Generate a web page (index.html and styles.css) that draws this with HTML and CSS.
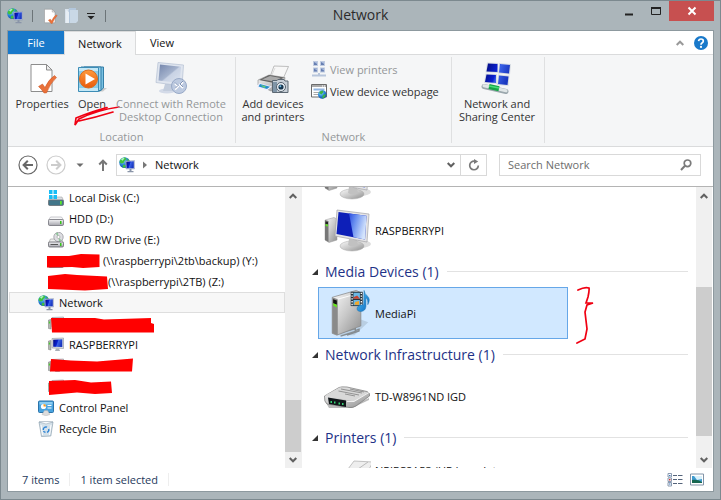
FILE: index.html
```html
<!DOCTYPE html>
<html lang="en">
<head>
<meta charset="utf-8">
<title>Network</title>
<link rel="stylesheet" href="styles.css">
</head>
<body>
<svg class="defs" aria-hidden="true">
  <defs>
    <radialGradient id="globe" cx=".35" cy=".3" r=".8"><stop offset="0" stop-color="#8fe0ff"/><stop offset=".5" stop-color="#2a86d8"/><stop offset="1" stop-color="#0a3f9c"/></radialGradient>
    <linearGradient id="screen" x2="1" y2=".4"><stop offset="0" stop-color="#2a4ce0"/><stop offset=".4" stop-color="#6a90f0"/><stop offset="1" stop-color="#d4e4fc"/></linearGradient>
    <linearGradient id="screen-dark" x2="1" y2=".3"><stop offset="0" stop-color="#030a78"/><stop offset=".5" stop-color="#0a20d0"/><stop offset=".6" stop-color="#3a62e8"/><stop offset="1" stop-color="#1a38c0"/></linearGradient>
    <linearGradient id="metal" x2="1" y2="1"><stop offset="0" stop-color="#fafafa"/><stop offset=".5" stop-color="#c9c9c9"/><stop offset="1" stop-color="#8e8e8e"/></linearGradient>
    <linearGradient id="drive" x2="0" y2="1"><stop offset="0" stop-color="#f4f4f6"/><stop offset="1" stop-color="#a4a4ac"/></linearGradient>
    <linearGradient id="orange" x2="0" y2="1"><stop offset="0" stop-color="#ff9a3c"/><stop offset="1" stop-color="#e85a0c"/></linearGradient>
    <linearGradient id="faded" x2="1" y2="1"><stop offset="0" stop-color="#7486ac"/><stop offset=".5" stop-color="#a5b3cd"/><stop offset=".55" stop-color="#c8d2e4"/><stop offset="1" stop-color="#dde4f0"/></linearGradient>
    <linearGradient id="note" x2="1" y2="1"><stop offset="0" stop-color="#58c4f6"/><stop offset="1" stop-color="#0869c0"/></linearGradient>
    <symbol id="i-network" viewBox="0 0 16 16">
      <circle cx="5.6" cy="5.6" r="5.4" fill="url(#globe)"/>
      <path d="M1 3.2Q3 0 6.400.600L7.500 2 5.500 4 4.500 6 2 6.500.500 5zM4.500 7.500L7 8.500 5.600 11 3.500 10zM8.500 1.200L10.600 4 8.500 4z" fill="#3fc43c"/>
      <path d="M2 2.500Q3.600.800 5.600 1.200L3.500 3.800z" fill="#b4f0c8"/>
      <path d="M6.500 4L15.500 3.500 15.500 12 7 12z" fill="#cfd6e6" stroke="#7b86a8" stroke-width=".4"/>
      <path d="M7.300 4.800L14.800 4.300 14.800 11.200 7.600 11.200z" fill="url(#screen-dark)"/>
      <path d="M10.500 12h2v2h2v1.200h-6v-1.200h2z" fill="#8a95a8"/>
    </symbol>
    <symbol id="i-props" viewBox="0 0 32 32">
      <path d="M5 2.500H20.500L26 8V29.500H5z" fill="#fff" stroke="#8d8d8d"/>
      <path d="M20.500 2.500V8H26z" fill="#eee" stroke="#8d8d8d"/>
      <path d="M12.500 24.500L16.500 22 19 25.500Q22.500 17.500 28.500 13.500L30.500 15.500Q24 21.500 20.500 31L18 31Q15.500 27 12.500 24.500z" fill="#e9713a" stroke="#c9501c" stroke-width=".5"/>
    </symbol>
    <symbol id="i-open" viewBox="0 0 32 32">
      <path d="M26 26L31 26 27 29.500 22 29.500z" fill="#ccc"/>
      <path d="M8 5L27.500 5V26L24 29H8z" fill="#79c1e2" stroke="#347fa8"/>
      <path d="M5 5H25V28.500H5z" fill="#9ad4ee" stroke="#347fa8"/>
      <path d="M2.500 5.500H22.500V29.500H2.500z" fill="#8acbe8" stroke="#3d8db6"/>
      <path d="M3 6H22V9H3zM3 26H22V29H3z" fill="#c3e8f7"/>
      <circle cx="12.500" cy="17" r="9" fill="url(#orange)" stroke="#dd6b1c"/>
      <path d="M9.500 11.500L19 17 9.500 22.500z" fill="#fff"/>
    </symbol>
    <symbol id="i-remote" viewBox="0 0 32 32">
      <ellipse cx="12" cy="29" rx="8" ry="2.500" fill="#d3dae8"/>
      <path d="M10 22H17L18 29H8z" fill="#c3cddd"/>
      <path d="M3 .5L28.500 3 27 24 1 20.500z" fill="#dfe5ef" stroke="#b5c0d2" stroke-width=".7"/>
      <path d="M5 2.500L26 4.800 24.800 21 3.500 18.500z" fill="url(#faded)"/>
      <circle cx="24" cy="24" r="7.500" fill="#bdcae0" stroke="#98a9c7"/>
      <path d="M20 21.500L23 24.500 20 27.500M28 20L25 23 28 26" fill="none" stroke="#fff" stroke-width="1.800"/>
      <path d="M20 20.500L23 23.500 20 26.500M28 19L25 22 28 25" fill="none" stroke="#667ba5" stroke-width=".8"/>
    </symbol>
    <symbol id="i-adddev" viewBox="0 0 32 32">
      <path d="M17 4L31.500 4.500 26 17 13 15z" fill="#f7f7f7" stroke="#a5a5a5" stroke-width=".7"/>
      <path d="M18 6L14.500 14" stroke="#ddd"/>
      <path d="M1 18L12 13 28 15.500 27 24 14 29 1 23z" fill="url(#metal)" stroke="#777" stroke-width=".5"/>
      <path d="M2 18L12 13 27 15.500 17 21z" fill="#626262"/>
      <path d="M5 17.500L13 14 24 16 17 19.500z" fill="#aaa"/>
      <path d="M2 21L15 24.500 10 28.500 0 25z" fill="#eef"/>
      <path d="M3 22L13 24.700 10 27 1.500 24.500z" fill="#268dca"/><path d="M4 23L9 24.500 7 26z" fill="#6ad36b"/>
      <path d="M15.500 20V18.500H20L21 17.500H27L28 19H31V30.500H15.500z" fill="#c6ced6" stroke="#5c6873"/>
      <path d="M16 20H20V30H16z" fill="#8095a7"/>
      <circle cx="24" cy="25" r="4.500" fill="#eaf0f5" stroke="#55616d"/><circle cx="24" cy="25" r="2.600" fill="#16364f"/><circle cx="23.300" cy="24.300" r="1" fill="#71bbe2"/>
    </symbol>
    <symbol id="i-share" viewBox="0 0 32 32">
      <path d="M6 .5L17 1V11L4.500 10.500zM18 1L30 2 29 12.500 17 11.500zM4.500 11.500L16 12V22L3 21zM17 12.500L28.500 13.500 27.500 24 16 23z" fill="#d7dce2"/>
      <path d="M7 1.500L16.500 2V10L5.500 9.500zM19 2L29 3 28 11.500 18 10.500zM5.500 12.500L15 13V21L4 20zM18 13.500L27.500 14.500 26.500 23 17 22z" fill="url(#screen-dark)"/>
      <path d="M3 24.500L25 29.500" stroke="#9ba7ad" stroke-width="5" stroke-linecap="round"/>
      <path d="M3 23.800L25 28.800" stroke="#e0e6e7" stroke-width="3" stroke-linecap="round"/>
      <path d="M8 24.500L18 26.800" stroke="#16a448" stroke-width="5"/><path d="M8 24L18 26" stroke="#46dd77" stroke-width="1.500"/>
    </symbol>
    <symbol id="i-viewprinters" viewBox="0 0 16 16">
      <path d="M2 0H7V5H2zM9 0H14V5H9zM2 6.500H7V11.500H2zM9 6.500H14V11.500H9z" fill="#bfcbe0"/>
      <path d="M3 1H6V4H3zM10 1H13V4H10zM3 7.500H6V10.500H3zM10 7.500H13V10.500H10z" fill="#667eb1"/>
      <path d="M3 1L6 1 6 3zM10 1L13 1 13 3zM3 7.500L6 7.500 6 9.500zM10 7.500L13 7.500 13 9.500z" fill="#a9bbdd"/>
      <path d="M7 12H9V14H7zM1 13.500H15V15.500H1z" fill="#b8c6dc"/>
    </symbol>
    <symbol id="i-webpage" viewBox="0 0 16 16">
      <path d="M.5 1.500H15.500V14H.5z" fill="#fff" stroke="#6b6b6b"/>
      <path d="M1 2H15V4H1z" fill="#aaa"/><path d="M11 2.500h1v1h-1zM13 2.500h1v1h-1z" fill="#fff"/>
      <path d="M2.500 5.500H13.500V7.500H2.500z" fill="#91b5e1"/><path d="M2.500 9.500H8M2.500 11.500H8" stroke="#a9a9a9"/>
      <circle cx="11.300" cy="11.500" r="4.300" fill="url(#globe)"/><path d="M8 10Q9 7.500 11.500 7.500L12.500 9 10.500 11.500zM12 12L15 11 13.500 14.500 11 15.500z" fill="#3db544"/>
    </symbol>
    <symbol id="i-drive" viewBox="0 0 16 16">
      <path d="M2.500 6H13.500L15.500 9H.5z" fill="#f7f7f8" stroke="#a9a9b0" stroke-width=".6"/>
      <rect x=".5" y="8.500" width="15" height="6" rx="1.200" fill="url(#drive)" stroke="#71717a" stroke-width=".8"/>
      <path d="M12 10h1.500v3H12z" fill="#38c31b"/>
    </symbol>
    <symbol id="i-windrive" viewBox="0 0 16 16">
      <path d="M2 7H14L15.500 10.500H.5z" fill="#dcdee2" stroke="#999" stroke-width=".5"/>
      <path d="M1 0H4.500V4H1zM5.500 0H9V4H5.500zM1 5H4.500V9H1zM5.500 5H9V9H5.500z" fill="#18bdf5"/>
      <rect x=".5" y="10" width="15" height="5.500" rx="1.200" fill="#42768a" stroke="#676d74" stroke-width=".8"/>
      <path d="M12 11h1.800v3.500H12z" fill="#5be52a"/>
    </symbol>
    <symbol id="i-dvd" viewBox="0 0 16 16">
      <path d="M2.500 7H13.500L15.500 11H.5z" fill="#eee" stroke="#999" stroke-width=".6"/>
      <circle cx="10.500" cy="5" r="4.700" fill="#dedee2" stroke="#8d8d94" stroke-width=".7"/><path d="M10.500 5L7.500 1.500 10 .600zM10.500 5L13.500 8.500 11 9.500z" fill="#90c59b"/><circle cx="10.500" cy="5" r="1.500" fill="#fff" stroke="#888" stroke-width=".5"/>
      <rect x=".5" y="10" width="15" height="5" rx="1.200" fill="url(#drive)" stroke="#64646c" stroke-width=".8"/><path d="M2.500 12.500H10" stroke="#555"/><path d="M12 11h1.500v3H12z" fill="#38c31b"/>
    </symbol>
    <symbol id="i-pc" viewBox="0 0 16 16">
      <path d="M.5 4L3 3.500V13L.5 12.500z" fill="#b3b8b3" stroke="#777" stroke-width=".5"/><path d="M.8 5.500h1.300v2H.8z" fill="#4aca31"/>
      <path d="M4 1.500L15.500 1V11.500L4 11z" fill="#d9dce2" stroke="#8f95a0" stroke-width=".6"/><path d="M5.200 2.700L14.300 2.200V10.100L5.200 9.800z" fill="url(#screen-dark)"/>
      <path d="M8 11.500h3l1 2.500h-5z" fill="#a9afb8"/>
    </symbol>
    <symbol id="i-cpl" viewBox="0 0 16 16">
      <rect x=".5" y="1" width="15" height="11.500" rx="1" fill="#48a3df" stroke="#2b73a9"/><path d="M1.500 2H14.500V4.500H1.500z" fill="#8bcdf2"/>
      <circle cx="5.500" cy="6.500" r="2.600" fill="#fff"/><path d="M5.500 6.500V4A2.500 2.500 0 0 1 8 6.500z" fill="#f29b22"/><path d="M9.500 5.500H13.500M9.500 8H13.500" stroke="#fff" stroke-width="1.200"/>
      <path d="M6.500 10.500H9.500L12 14.500 8 15.800 4 14.500z" fill="#dcdcdc" stroke="#aaa" stroke-width=".4"/>
    </symbol>
    <symbol id="i-bin" viewBox="0 0 16 16">
      <path d="M1 1L15 1 12.800 15 3.500 15.500z" fill="#d4e1ea" stroke="#8ca0af" stroke-width=".7"/><path d="M1 1L8 3 15 1 8 .400z" fill="#f7fafc" stroke="#93a5b2" stroke-width=".5"/>
      <path d="M3 4L4.500 14M13 4L11.500 14" stroke="#fff"/><path d="M5.300 9A2.700 2.700 0 0 1 9 6.200M10.700 8A2.700 2.700 0 0 1 9 11.300M7.500 11.300A2.700 2.700 0 0 1 5.500 10" fill="none" stroke="#2e84d5" stroke-width="1.400"/>
    </symbol>
    <symbol id="i-bigpc" viewBox="0 0 48 48">
      <ellipse cx="37" cy="38" rx="11" ry="4" fill="#ddd"/>
      <path d="M2 14L11 11.500 14 13V34L6 36.500 2 34z" fill="url(#metal)" stroke="#999" stroke-width=".5"/>
      <path d="M2 14L5.500 15V36L2 34z" fill="#777"/><path d="M2.500 15.500L5 16V18.500L2.500 18z" fill="#222"/><path d="M2.500 18L5 18.500V20.500L2.500 20z" fill="#62df28"/>
      <ellipse cx="29" cy="40" rx="12" ry="5" fill="url(#metal)" stroke="#aaa" stroke-width=".5"/>
      <path d="M26 33L34 34 35 39Q30 42 25 39z" fill="#c1c1c1"/>
      <path d="M14 4L46 8 44 36 12 30z" fill="#e5e5e6" stroke="#a4a4a8" stroke-width=".7"/>
      <path d="M15.500 6L43.500 9.800 42 33.500 13.500 28z" fill="#0d1fb8"/><path d="M26 7.500L43.500 9.800 42 33.500 30.500 31.300z" fill="url(#screen)"/>
    </symbol>
    <symbol id="i-media" viewBox="0 0 48 52">
      <path d="M22 46L36 42 39 33 47 36 32 50 14 50z" fill="#a8bdcf" opacity=".6"/>
      <path d="M15 48L33 43V46L17 51M33 45L37 43.500 37 45.500 24 50" fill="none" stroke="#858c91" stroke-width="1.500"/>
      <path d="M8 9L34 1.500 39 4V40L13 50 8 48z" fill="url(#metal)" stroke="#888" stroke-width=".8"/>
      <path d="M8 9L14 11V50L8 48z" fill="#8a8a8a"/><path d="M14 11L39 4" stroke="#fff"/>
      <path d="M9 11L13 12.500V17L9 15.500z" fill="#111"/><path d="M9 15.500L13 17V20L9 18z" fill="#65e51c"/>
      <path d="M28 3H41V18.500H28z" fill="#26333b"/><path d="M31 4H38V10.500H31zM31 12H38V17.500H31z" fill="#6bb8e4"/><path d="M31 9L35 7 38 10.500H31z" fill="#c8402c"/><path d="M33 14L37 13V17H32z" fill="#f3a728"/>
      <path d="M29.500 4V18M39.500 4V18" stroke="#fff" stroke-width="1.500" stroke-dasharray="1.500 1.500"/>
      <path d="M42.500 1.500Q43 5 46 7.500 50 11 46.500 17 47 11 44.500 9.500V19Q44 24 39 24.500 34 24 35 20 37 16.500 42 17z" fill="url(#note)" stroke="#176cab" stroke-width=".5"/>
    </symbol>
    <symbol id="i-router" viewBox="0 0 48 24">
      <path d="M2 15L25 22 46 12V14L29 22 6 22z" fill="#bbb"/>
      <path d="M1.500 10L16 1.500Q18 .500 24 1L44 5.500Q47.500 7 46.500 10L33 20Q30 22 26 21.500L4 18Q1 16 1.500 10z" fill="url(#metal)" stroke="#777" stroke-width=".7"/>
      <path d="M2 9.500L17 1.500 45 6.500 31 15.500z" fill="#d8d8d8"/>
      <path d="M18 3L39 7M15.500 5L36 9M27 3L41 6M22 8L32 10" stroke="#8b8b8b" stroke-width=".9"/>
      <path d="M5 11.500L23 14.500V21L6 18z" fill="#101619"/><path d="M7.500 15h1.500v2H7.500zM11 15.500h1.500v2H11zM15.500 16.500H17v2h-1.500zM19 17h1.500v2H19z" fill="#37d275"/>
      <path d="M24 15.500L31 15.500 46 6.500" fill="none" stroke="#fff" stroke-width=".8"/>
    </symbol>
    <symbol id="i-up" viewBox="0 0 8 6"><path d="M.7 5L4 1.700 7.300 5" fill="none" stroke="currentColor" stroke-width="2"/></symbol>
    <symbol id="i-down" viewBox="0 0 8 6"><path d="M.7 1L4 4.300 7.300 1" fill="none" stroke="currentColor" stroke-width="2"/></symbol>
  </defs>
</svg>

<div class="window">
  <header class="titlebar">
    <div class="quick">
      <svg class="i16"><use href="#i-network"/></svg>
      <span class="bar"></span>
      <button aria-label="Properties"><svg class="i16"><use href="#i-props"/></svg></button>
      <button aria-label="Open folder"><svg class="i16" viewBox="0 0 16 16"><path d="M1 1H5V15H1z" fill="#d9e3ed"/><path d="M5 0H12V15H2z" fill="#b3c7dc"/><path d="M6 2H14V13L12 15H6z" fill="#c9d8e6"/><path d="M2 2L5 4V15H2z" fill="#e7eef4"/></svg></button>
      <button aria-label="Customize"><svg class="i8" viewBox="0 0 8 8"><path d="M0 1.500H8" stroke="#222"/><path d="M.5 4H7.500L4 7.500z" fill="#222"/></svg></button>
      <span class="bar"></span>
    </div>
    <h1>Network</h1>
    <div class="caption">
      <button class="cap" aria-label="Minimize"><svg viewBox="0 0 10 10"><path d="M1 8.500H9" stroke="#222" stroke-width="2"/></svg></button>
      <button class="cap" aria-label="Maximize"><svg viewBox="0 0 10 10"><path d="M.5 1.500H9.500V8.500H.5z" fill="none" stroke="#222"/><path d="M0 2H10" stroke="#222" stroke-width="2"/></svg></button>
      <button class="cap close" aria-label="Close"><svg viewBox="0 0 10 10"><path d="M1.500 1.500L8.500 8.500M8.500 1.500L1.500 8.500" stroke="#fff" stroke-width="2"/></svg></button>
    </div>
  </header>

  <div class="client">
    <nav class="tabs">
      <button class="tab file">File</button>
      <button class="tab active">Network</button>
      <button class="tab">View</button>
      <span class="grow"></span>
      <button class="mini" aria-label="Minimize the Ribbon"><svg class="chev"><use href="#i-up"/></svg></button>
      <button class="mini" aria-label="Help"><svg class="help" viewBox="0 0 14 14"><circle cx="7" cy="7" r="7" fill="#1979ca"/><path d="M4.600 5.200Q4.800 3 7 3 9.300 3 9.300 5 9.300 6.200 8 6.900 7 7.500 7 8.700" fill="none" stroke="#fff" stroke-width="1.700"/><circle cx="7" cy="10.900" r="1.100" fill="#fff"/></svg></button>
    </nav>

    <section class="ribbon">
      <div class="group location">
        <div class="tools">
          <button class="big props"><svg class="i32"><use href="#i-props"/></svg><span>Properties</span></button>
          <button class="big open"><svg class="i32"><use href="#i-open"/></svg><span>Open</span>
            <svg class="underline" viewBox="0 0 48 24"><path d="M46 2Q24 5 6 14L2 20 3 13Q20 6 34 2.500M6 16Q24 12 40 7" fill="none" stroke="#f00012" stroke-width="1.700" stroke-linecap="round"/></svg></button>
          <button class="big remote" disabled><svg class="i32"><use href="#i-remote"/></svg><span>Connect with Remote<br>Desktop Connection</span></button>
        </div>
        <div class="caption-label">Location</div>
      </div>
      <div class="group net">
        <div class="tools">
          <button class="big add"><svg class="i32"><use href="#i-adddev"/></svg><span>Add devices<br>and printers</span></button>
          <div class="stack">
            <button class="small" disabled><svg class="i16"><use href="#i-viewprinters"/></svg>View printers</button>
            <button class="small"><svg class="i16"><use href="#i-webpage"/></svg>View device webpage</button>
          </div>
        </div>
        <div class="caption-label">Network</div>
      </div>
      <div class="group share">
        <div class="tools">
          <button class="big"><svg class="i32"><use href="#i-share"/></svg><span>Network and<br>Sharing Center</span></button>
        </div>
      </div>
    </section>

    <div class="address">
      <button class="round" aria-label="Back"><svg class="i20" viewBox="0 0 20 20"><circle cx="10" cy="10" r="9" fill="none" stroke="#686868" stroke-width="1.200"/><path d="M15 10H6M9.800 5.800L5.600 10 9.800 14.200" fill="none" stroke="#686868" stroke-width="2"/></svg></button>
      <button class="round" aria-label="Forward"><svg class="i20" viewBox="0 0 20 20"><circle cx="10" cy="10" r="9" fill="none" stroke="#ccc" stroke-width="1.200"/><path d="M5 10H14M10.200 5.800L14.400 10 10.200 14.200" fill="none" stroke="#ccc" stroke-width="2"/></svg></button>
      <button class="hist" aria-label="Recent locations"><svg class="i8" viewBox="0 0 8 8"><path d="M.5 2.500H7.500L4 6z" fill="#6b6b6b"/></svg></button>
      <button class="up" aria-label="Up"><svg class="arrow" viewBox="0 0 10 12"><path d="M5 12V2M1.200 5.500L5 1.700 8.800 5.500" fill="none" stroke="#777" stroke-width="2"/></svg></button>
      <div class="path">
        <svg class="i16"><use href="#i-network"/></svg>
        <svg class="i8" viewBox="0 0 8 8"><path d="M2 .5L6 4 2 7.500z" fill="#777"/></svg>
        <a href="#">Network</a>
        <button class="drop" aria-label="Previous locations"><svg class="chev"><use href="#i-down"/></svg></button>
        <button class="refresh" aria-label="Refresh"><svg viewBox="0 0 12 12"><path d="M10.300 6.500A4.300 4.300 0 1 1 6.500 2.200" fill="none" stroke="#7a7a7a" stroke-width="1.700"/><path d="M6 0V5L10.200 2.500z" fill="#7a7a7a"/></svg></button>
      </div>
      <form class="search"><input type="search" placeholder="Search Network" aria-label="Search Network"><svg viewBox="0 0 12 12"><circle cx="7.500" cy="4.300" r="3.300" fill="none" stroke="#7a7a7a" stroke-width="1.700"/><path d="M5 6.800L1 11" stroke="#7a7a7a" stroke-width="2"/></svg></form>
    </div>

    <main class="panes">
      <nav class="tree">
        <a class="row child" href="#"><svg class="i16"><use href="#i-windrive"/></svg>Local Disk (C:)</a>
        <a class="row child" href="#"><svg class="i16"><use href="#i-drive"/></svg>HDD (D:)</a>
        <a class="row child" href="#"><svg class="i16"><use href="#i-dvd"/></svg>DVD RW Drive (E:)</a>
        <a class="row child" href="#"><svg class="i16"><use href="#i-drive"/></svg><span class="hidden-name"></span>(\\raspberrypi\2tb\backup) (Y:)
          <svg class="mark" viewBox="0 0 110 21"><path d="M0 5H22L34 3 52.500 3.500V16L36 17 25 16 0 16.500z"/></svg></a>
        <a class="row child" href="#"><svg class="i16"><use href="#i-drive"/></svg><span class="hidden-name wide"></span>(\\raspberrypi\2TB) (Z:)
          <svg class="mark" viewBox="0 0 110 21"><path d="M1 4L18 2 30 3 60 4.500 61 17 38 18.500 1 17z"/></svg></a>
        <a class="row selected" href="#"><svg class="i16"><use href="#i-network"/></svg>Network</a>
        <a class="row child" href="#" aria-label="Computer"><svg class="i16"><use href="#i-pc"/></svg>
          <svg class="mark" viewBox="0 0 110 21"><path d="M4 4H48L57 5.500 104 4V9L107 10 107 18.500 5 18.500z"/></svg></a>
        <a class="row child" href="#"><svg class="i16"><use href="#i-pc"/></svg>RASPBERRYPI</a>
        <a class="row child" href="#" aria-label="Computer"><svg class="i16"><use href="#i-pc"/></svg>
          <svg class="mark" viewBox="0 0 110 21"><path d="M4 3L24 4.500 50 5.500 86 2.500 85 15.500 3 15.500z"/></svg></a>
        <a class="row child" href="#" aria-label="Computer"><svg class="i16"><use href="#i-pc"/></svg>
          <svg class="mark" viewBox="0 0 110 21"><path d="M2 4L28 3 44 5.500 64 4.500 65 16 48 17 30 15.500 2 18z"/></svg></a>
        <a class="row" href="#"><svg class="i16"><use href="#i-cpl"/></svg>Control Panel</a>
        <a class="row" href="#"><svg class="i16"><use href="#i-bin"/></svg>Recycle Bin</a>
      </nav>
      <div class="scroll">
        <svg class="chev"><use href="#i-up"/></svg><span class="track"></span><span class="thumb nav-thumb"></span><svg class="chev"><use href="#i-down"/></svg>
      </div>
      <section class="content">
        <div class="list">
          <div class="item"><svg class="i48"><use href="#i-bigpc"/></svg></div>
          <div class="item"><svg class="i48"><use href="#i-bigpc"/></svg>RASPBERRYPI</div>
          <h2>Media Devices (1)</h2>
          <div class="item chosen"><svg class="i48"><use href="#i-media"/></svg>MediaPi
            <svg class="brace" viewBox="0 0 20 60"><path d="M3 4Q10 .500 14 2 14.500 4 13 11L11 17 18 17 12 19 10 26 12 43 10 53 2 57" fill="none" stroke="#f00012" stroke-width="1.700" stroke-linecap="round"/></svg></div>
          <h2>Network Infrastructure (1)</h2>
          <div class="item"><svg class="i48" viewBox="0 0 48 48"><use href="#i-router" y="14" width="48" height="24"/></svg>TD-W8961ND IGD</div>
          <h2>Printers (1)</h2>
          <div class="item"><svg class="i48" viewBox="0 0 48 48"><path d="M31 6L50 7 44 18 22 18z" fill="#eee" stroke="#aaa" stroke-width=".7"/><path d="M35 14L45 7" stroke="#bbb"/></svg><span class="two-line">NPIEC8A53 (HP LaserJet<br>&nbsp;</span></div>
        </div>
      </section>
      <div class="scroll">
        <svg class="chev"><use href="#i-up"/></svg><span class="main-track"></span><span class="thumb main-thumb"></span><span class="track"></span><svg class="chev"><use href="#i-down"/></svg>
      </div>
    </main>

    <footer class="status">
      <span>7 items</span><span>1 item selected</span>
      <span class="grow"></span>
      <button aria-label="Details view"><svg class="i16" viewBox="0 0 16 16"><path d="M1 1.500H4.500V5H1zM1 6H4.500V9.500H1zM1 10.500H4.500V14H1z" fill="#fff" stroke="#8b9bb0"/><path d="M2 3h1.500v1H2zM2 11.500h1.500v1H2z" fill="#3674bd"/><path d="M2 7h1.500v1.500H2z" fill="#d33"/><path d="M6 3.500H10M11 3.500H15.500M6 7.500H10M11 7.500H15.500M6 11.500H10M11 11.500H15.500" stroke="#54637a"/></svg></button>
      <button aria-label="Large icons view"><svg class="i16" viewBox="0 0 16 16"><path d="M1.500 2H14.500V13H1.500z" fill="#fff" stroke="#8294a8"/><path d="M3 4H13V11H3z" fill="#3f9bd0"/><path d="M5 4H13V7L8 8z" fill="#d9f1fb"/><path d="M3 8Q8 7 13 10V11H3z" fill="#176750"/></svg></button>
    </footer>
  </div>
</div>
</body>
</html>
```
FILE: styles.css
```css
* { box-sizing: border-box; }
body { margin: 0; font: 11px/13px "Open Sans", "Noto Sans", sans-serif; color: #111; }
button { border: 0; padding: 0; margin: 0; background: none; font: inherit; color: inherit; }
a { color: inherit; text-decoration: none; }
svg { display: block; flex: none; }
.defs { position: absolute; width: 0; height: 0; }
.grow { flex: 1; }
.i8 { width: 8px; height: 8px; }
.i16 { width: 16px; height: 16px; }
.i20 { width: 20px; height: 20px; }
.i32 { width: 32px; height: 32px; }
.i48 { width: 48px; height: 48px; }
.chev { width: 8px; height: 6px; color: #606060; }

.window { display: flex; flex-direction: column; height: 100vh; padding: 0 6px 7px; background: #abb5ba; border: 1px solid #7c898f; }
.titlebar { display: grid; grid-template-columns: 1fr auto 1fr; height: 29px; }
.titlebar h1 { margin: 0; font-size: 14px; line-height: 28px; font-weight: 400; color: #2b2b2b; }
.quick { display: flex; align-items: center; gap: 6px; }
.quick .bar { width: 1px; height: 12px; margin: 0 3px; background: #6c7478; }
.quick .i8 { margin: 0 1px; }
.caption { display: flex; justify-content: flex-end; align-items: flex-start; }
.cap { display: flex; align-items: center; justify-content: center; width: 27px; height: 20px; }
.cap svg { width: 10px; height: 10px; }
.close { width: 45px; background: #c75050; }

.client { display: flex; flex: 1; flex-direction: column; min-height: 0; background: #fff; border: 1px solid #8d999f; }
.tabs { display: flex; height: 24px; align-items: stretch; border-bottom: 1px solid #dadbdc; }
.tab { padding: 0 14px; }
.tab.file { width: 56px; background: #1979ca; color: #fff; }
.tab.active { width: 72px; margin-bottom: -1px; background: #f5f6f7; border: 1px solid #dadbdc; border-bottom: 0; padding: 0; }
.mini { display: flex; align-items: center; padding: 0 5px; }
.mini .chev { color: #999; }
.help { width: 14px; height: 14px; }

.ribbon { display: flex; height: 92px; background: #f5f6f7; border-bottom: 1px solid #dadbdc; color: #333; }
.group { display: flex; flex-direction: column; margin: 2px 0 3px; padding-top: 5px; border-right: 1px solid #dfe0e1; }
.tools { display: flex; flex: 1; align-items: flex-start; }
.big { position: relative; display: flex; flex-direction: column; align-items: center; gap: 3px; white-space: nowrap; }
.big:disabled, .small:disabled { color: #949699; }
.caption-label { text-align: center; color: #949699; }
.location { width: 228px; }
.net { width: 216px; }
.share { width: 93px; }
.props { width: 56px; margin-left: 6px; }
.open { width: 44px; }
.remote { width: 114px; }
.add { width: 64px; margin-left: 5px; }
.share .big { width: 90px; }
.stack { display: flex; flex-direction: column; margin: -4px 0 0 6px; }
.small { display: flex; align-items: center; gap: 3px; height: 22px; white-space: nowrap; }
.underline { position: absolute; left: 3px; top: 43px; width: 48px; height: 24px; }

.address { display: flex; align-items: center; height: 40px; padding: 0 12px 4px 10px; border-bottom: 1px solid #b4b4b4; }
.round + .round { margin-left: 8px; }
.hist { margin-left: 10px; }
.up { margin: 0 8px 0 14px; }
.arrow { width: 10px; height: 12px; }
.path { display: flex; flex: 1; align-items: center; height: 22px; padding-left: 2px; border: 1px solid #d9d9d9; }
.path > .i8 { margin: 0 6px; }
.drop { display: flex; margin-left: auto; padding: 0 5px; }
.refresh { display: flex; align-items: center; align-self: stretch; justify-content: center; width: 26px; border-left: 1px solid #d9d9d9; }
.refresh svg { width: 12px; height: 12px; }
.search { display: flex; align-items: center; width: 202px; height: 22px; margin-left: 12px; padding: 0 8px; border: 1px solid #d9d9d9; }
.search input { flex: 1; min-width: 0; padding: 0; border: 0; outline: 0; background: none; font: inherit; }
.search input::placeholder { color: #6d6d6d; opacity: 1; }
.search svg { width: 12px; height: 12px; }

.panes { display: flex; flex: 1; min-height: 0; margin: 0 1px; }
.tree { flex: 0 0 276px; overflow: hidden; }
.row { position: relative; display: flex; align-items: center; gap: 5px; height: 21px; padding-left: 28px; border: 1px solid transparent; white-space: nowrap; }
.child { padding-left: 38px; }
.selected { background: #f7f7f7; border-color: #dedede; }
.hidden-name { width: 29px; }
.hidden-name.wide { width: 34px; }
.mark { position: absolute; left: 37px; top: 0; width: 110px; height: 21px; fill: #f00; }
.scroll { display: flex; flex: 0 0 16px; flex-direction: column; align-items: center; padding: 6px 0 5px; background: #f0f0f0; }
.track { flex: 1; }
.thumb { width: 100%; background: #cdcdcd; }
.nav-thumb { height: 52px; margin-bottom: 5px; }
.main-track { height: 88px; }
.main-thumb { height: 149px; }
.content { flex: 1; overflow: hidden; border-left: 1px solid #f0f0f0; }
.list { margin: -35px 8px 0 16px; }
.item { position: relative; display: flex; align-items: center; gap: 4px; width: 250px; height: 52px; padding-left: 4px; border: 1px solid transparent; white-space: nowrap; }
.chosen { background: #d1e8ff; border-color: #66a7e8; }
.two-line { line-height: 16px; }
.brace { position: absolute; left: 256px; top: -2px; width: 20px; height: 60px; }
h2 { display: flex; align-items: center; gap: 8px; height: 31px; margin: 0 0 0 -6px; font-size: 14px; font-weight: 400; color: #1e3287; white-space: nowrap; }
h2::before { content: ""; border: 3px solid; border-color: transparent #333 #333 transparent; margin-right: -1px; }
h2::after { content: ""; flex: 1; height: 1px; background: #e2e2e2; }

.status { display: flex; align-items: center; height: 23px; padding: 0 8px 0 14px; color: #1e395b; }
.status > span:not(.grow) { padding-right: 10px; margin-right: 10px; border-right: 1px solid #eee; }
.status button { margin-left: 6px; }
```
